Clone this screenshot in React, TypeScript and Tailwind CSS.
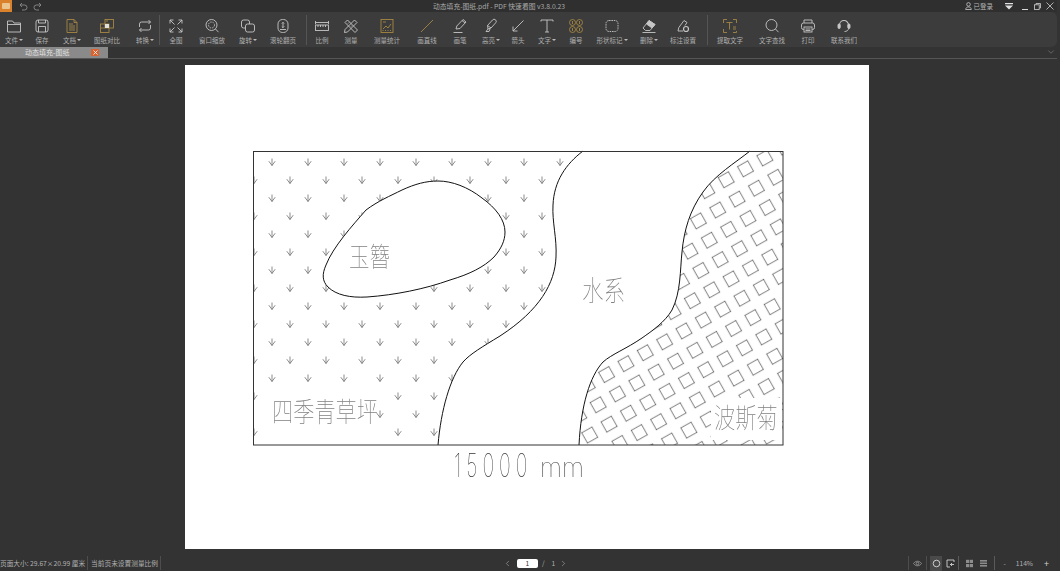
import React from 'react';
import { ChevronLeft, ChevronRight, ChevronDown } from 'lucide-react';

const GOLD = '#a58743';
const ICON = '#c6c6c6';

type Tool = { label: string; w: string; ml?: string; caret?: boolean; gold?: boolean; icon: React.ReactNode };

const Ico: React.FC<{ children: React.ReactNode; gold?: boolean }> = ({ children, gold }) => (
    <svg width="16" height="16" viewBox="0 0 16 16" fill="none" stroke={gold ? GOLD : ICON} strokeWidth="0.9">
        {children}
    </svg>
);

const tools: Tool[] = [
    { label: '文件', w: 'w-[28px]', caret: true, icon: <path d="M1.5 3h5l1.5 2h6.5v9h-13z M1.5 6.5h13" /> },
    { label: '保存', w: 'w-[28px]', icon: <><rect x="2" y="2" width="12" height="12" rx="2" /><path d="M4.5 2v3h7V2 M4.5 14V8.5h7V14" /></> },
    { label: '文档', w: 'w-[32px]', caret: true, gold: true, icon: <path d="M3 1.5h7l3 3v10H3z M10 1.5v3h3 M5 6h4 M5 8h6 M5 10h6 M5 12h6" /> },
    { label: '图纸对比', w: 'w-[38px]', gold: true, icon: <><rect x="6" y="1.5" width="8.5" height="8.5" /><rect x="1.5" y="6" width="8.5" height="8.5" /><rect x="6" y="6" width="4" height="4" fill="#e0e0e0" stroke="none" /><path d="M2 10h4 M7 3h2" /></> },
    { label: '转换', w: 'w-[28px]', ml: 'ml-[5px]', caret: true, icon: <path d="M2.5 9V6a2 2 0 0 1 2-2h9 M11.5 2l2 2-2 2 M13.5 7v3a2 2 0 0 1-2 2h-9 M4.5 10l-2 2 2 2" /> },
    { label: '', w: 'sep', icon: null },
    { label: '全图', w: 'w-[32px]', icon: <path d="M6.5 6.5L2 2 M2 5.5V2h3.5 M9.5 6.5L14 2 M10.5 2H14v3.5 M6.5 9.5L2 14 M2 10.5V14h3.5 M9.5 9.5L14 14 M14 10.5V14h-3.5" /> },
    { label: '窗口缩放', w: 'w-[40px]', icon: <><circle cx="7.5" cy="7" r="5.5" /><circle cx="7.5" cy="7" r="3" strokeDasharray="1.5 1" /><path d="M11.5 11l3 3.2" /></> },
    { label: '旋转', w: 'w-[32px]', caret: true, icon: <><rect x="1.5" y="2" width="8" height="8" rx="2" /><rect x="5.5" y="6" width="9" height="8" rx="2" fill="#3c3c3c" /></> },
    { label: '滚轮翻页', w: 'w-[38px]', icon: <><rect x="3" y="1.5" width="10" height="13" rx="4.5" /><path d="M8 4.5v5 M6.8 5.5L8 4.3l1.2 1.2 M6.8 8.5L8 9.7l1.2-1.2" /><path d="M5 11.5h6" /></> },
    { label: '', w: 'sep', ml: 'ml-[4px]', icon: null },
    { label: '比例', w: 'w-[30px]', icon: <><path d="M1.5 3v3 M14.5 3v3 M1.5 4.5h13" /><rect x="1.5" y="7" width="13" height="5.5" /><path d="M4 7v2 M6.5 7v2 M9 7v2 M11.5 7v2" /></> },
    { label: '测量', w: 'w-[28px]', icon: <path d="M2 4.5L4.5 2l10 10-2.5 2.5z M11.5 2l2.5 2.5-9.5 9.5-3 .5.5-3z M5 5.5l1-1 M8 8.5l1-1" /> },
    { label: '测量统计', w: 'w-[44px]', gold: true, icon: <><rect x="2" y="1.5" width="12" height="13" /><path d="M4 11l3-3 2 2 3-4 M4 4h3 M4 13v-1 M6.5 13v-1 M9 13v-1 M11.5 13v-1" /></> },
    { label: '画直线', w: 'w-[36px]', gold: true, icon: <path d="M2 14L14 2" /> },
    { label: '画笔', w: 'w-[30px]', icon: <path d="M4 11l.8-3L11 1.5l3 2.5-6 6.5z M10 2.5l3 2.5 M1.5 14.5h9" /> },
    { label: '高亮', w: 'w-[32px]', caret: true, icon: <path d="M5 11l-.5-3.5L9.5 2a2 2 0 0 1 3.2 2.8L8 10z M4.5 7.5L8 10 M5 11l-2 2.5h3l1-2.5" /> },
    { label: '箭头', w: 'w-[22px]', icon: <path d="M13.5 2.5L3 13 M3 8.5V13h4.5" /> },
    { label: '文字', w: 'w-[36px]', caret: true, icon: <path d="M2 3.5V2h12v1.5 M8 2v12 M6 14h4" /> },
    { label: '编号', w: 'w-[22px]', gold: true, icon: <><circle cx="4.5" cy="4.5" r="3" /><circle cx="11.5" cy="4.5" r="3" /><circle cx="4.5" cy="11.5" r="3" /><circle cx="11.5" cy="11.5" r="3" /><path d="M4.5 3v3 M11.5 3v3 M4.5 10v3 M11.5 10v3" /></> },
    { label: '形状标记', w: 'w-[50px]', caret: true, icon: <rect x="2" y="2.5" width="12" height="11" rx="3" strokeDasharray="1.6 .8" /> },
    { label: '删除', w: 'w-[24px]', caret: true, icon: <><path d="M2 10l6-7.5 6 4-5 6H4.5z" /><path d="M5.5 6L11 10l3-3.5-6-4z" fill={ICON} /><path d="M1.5 14.5h13" /></> },
    { label: '标注设置', w: 'w-[44px]', icon: <><path d="M3 13l.8-3.5L9 2.5l3 2-2 3 M3 13h5" /><circle cx="11" cy="11" r="2.5" strokeWidth="1.2" /></> },
    { label: '', w: 'sep', ml: 'ml-[2px]', icon: null },
    { label: '提取文字', w: 'w-[44px]', gold: true, icon: <path d="M5 1.5H1.5V5 M11 1.5h3.5V5 M5 14.5H1.5V11 M14.5 13v1.5H11 M4.5 4.5h6 M7.5 4.5v7 M11 9h3 M11 11h3" /> },
    { label: '文字查找', w: 'w-[40px]', icon: <><circle cx="7.5" cy="7" r="5.5" /><path d="M11.5 11l3 3.2" /></> },
    { label: '打印', w: 'w-[32px]', icon: <><path d="M4 5V2h8v3" /><rect x="1.5" y="5" width="13" height="6.5" rx="2" /><rect x="4" y="9" width="8" height="5" fill="#3c3c3c" /><path d="M5.5 11h5 M5.5 12.5h5" /></> },
    { label: '联系我们', w: 'w-[40px]', icon: <><path d="M3.5 9V7a4.5 4.5 0 0 1 9 0v2" strokeWidth="1.1" /><rect x="2" y="6" width="2.2" height="4.5" rx="1" fill={ICON} /><rect x="11.8" y="6" width="2.2" height="4.5" rx="1" fill={ICON} /><path d="M12.5 10.5c0 2-2 3-4 3" /></> },
];

const ToolItem: React.FC<{ tool: Tool }> = ({ tool }) => {
    if (tool.w === 'sep') {
        return <div className={`${tool.ml ?? ''} mt-[3px] h-[30px] w-px bg-[#555555]`} />;
    }
    return (
        <div className={`${tool.w} ${tool.ml ?? ''} flex flex-col items-center`}>
            <div className="mt-[5px] flex h-[17px] items-center justify-center">
                <Ico gold={tool.gold}>{tool.icon}</Ico>
            </div>
            <div className="mt-[1px] flex items-center whitespace-nowrap text-[6.5px] leading-[10px] text-[#b0b0b0]">
                {tool.label}
                {tool.caret && <span className="ml-[1px] border-x-[2px] border-t-[2px] border-x-transparent border-t-[#bbbbbb]" />}
            </div>
        </div>
    );
};

const ARROW = 'M0 -3.5V3.5 M-3.2 -.8L0 3.5L3.2 -.8';
const LEFT_RIVER = 'C566 164 554 181 553 205C552 222 557 238 556 257C555 283 540 310 500 336C482 347 470 354 463 362C450 378 441 410 438 445';
const RIGHT_RIVER = 'C735 163 715 175 703 192C690 210 684 230 682 252C680 270 681 292 672 310C665 322 652 331 642 338C626 349 612 354 603 362C590 376 581 405 579 445';

const MapDrawing = () => (
    <svg className="will-change-transform" width="684" height="484" viewBox="185 65 684 484" fill="none">
        <defs>
            <pattern id="grass" x="254" y="162" width="36" height="36" patternUnits="userSpaceOnUse">
                <g stroke="#666666" strokeWidth=".75">
                    <path transform="translate(18 0)" d={ARROW} />
                    <path transform="translate(18 36)" d={ARROW} />
                    <path transform="translate(0 18)" d={ARROW} />
                    <path transform="translate(36 18)" d={ARROW} />
                </g>
            </pattern>
            <pattern id="tiles" x="749.75" y="153.75" width="22.2" height="22.2" patternUnits="userSpaceOnUse" patternTransform="rotate(-29.4 749.75 153.75)">
                <rect x="5.1" y="5.1" width="12" height="12" stroke="#555555" strokeWidth=".7" />
            </pattern>
        </defs>
        <path d={`M253 151H583${LEFT_RIVER}H253Z`} fill="url(#grass)" />
        <path d={`M783 151H750${RIGHT_RIVER}H783Z`} fill="url(#tiles)" />
        <rect x="262" y="388" width="113" height="54" fill="#ffffff" />
        <rect x="711" y="398" width="71" height="42" fill="#ffffff" />
        <path
            d="M366 210C378 201 390 196 402 190C415 184 426 181 438 181C452 181 468 187 482 198C496 208 505 220 505 232C505 241 501 249 494 257C484 267 470 274 450 280C425 289 395 295 367 297C350 298 336 295 328 287C322 281 322 274 326 265C333 247 352 226 366 210Z"
            fill="#ffffff"
            stroke="#111111"
        />
        <path d={`M583 151${LEFT_RIVER}`} stroke="#111111" />
        <path d={`M750 151${RIGHT_RIVER}`} stroke="#111111" />
        <rect x="253.5" y="151.5" width="529.5" height="293.5" stroke="#333333" />
        <g fill="#808080" fontFamily='"Noto Sans CJK SC", sans-serif' fontWeight="100">
            <text transform="translate(349 267) scale(1 1.35)" fontSize="20.5">玉簪</text>
            <text transform="translate(582 301) scale(1 1.3)" fontSize="21.5">水系</text>
            <text transform="translate(272 422) scale(1 1.3)" fontSize="21.2">四季青草坪</text>
            <text transform="translate(714 428) scale(1 1.3)" fontSize="21.2">波斯菊</text>
        </g>
        <g fill="#333333" fontFamily='Inter, "Liberation Sans", sans-serif' fontWeight="100">
            <text transform="translate(454 477) scale(.6 1)" fontSize="33" letterSpacing="8.3">15000</text>
            <text x="540" y="477" fontSize="26" textLength="44" lengthAdjust="spacingAndGlyphs">mm</text>
        </g>
    </svg>
);

export default function App() {
    return (
        <div className="h-[571px] w-[1060px] overflow-hidden bg-[#333333] font-['Noto_Sans_CJK_SC','Liberation_Sans',sans-serif]">
            <div className="flex h-full w-[1057px] flex-col">
                {/* title bar */}
                <div className="flex h-[12px] items-center bg-[#2f2f2f] text-[#b8b8b8]">
                    <div className="flex h-[12px] w-[12px] items-center justify-center bg-[#d9822b]">
                        <div className="h-[6px] w-[8px] rounded-[1px] bg-[#ecc48e]" />
                    </div>
                    <svg className="ml-[7px]" width="9" height="9" viewBox="0 0 9 9" fill="none" stroke="#8a8a8a" strokeWidth=".9"><path d="M3 1L1 3l2 2 M1 3h4.5a2.5 2.5 0 0 1 0 5H3" /></svg>
                    <svg className="ml-[5px]" width="9" height="9" viewBox="0 0 9 9" fill="none" stroke="#8a8a8a" strokeWidth=".9"><path d="M6 1l2 2-2 2 M8 3H3.5a2.5 2.5 0 0 0 0 5H6" /></svg>
                    <div className="ml-[391px] whitespace-nowrap text-[6.8px] leading-none text-[#a8a8a8]">动态填充-图纸.pdf - PDF 快速看图 v3.8.0.23</div>
                    <div className="ml-auto flex items-center pr-[3px]">
                        <svg width="7" height="8" viewBox="0 0 7 8" fill="none" stroke="#c8c8c8" strokeWidth=".8"><circle cx="3.5" cy="2.4" r="1.8" /><path d="M.7 7.5c0-3.4 5.6-3.4 5.6 0z" /></svg>
                        <span className="ml-[2px] text-[6.5px] leading-none text-[#b4b4b4]">已登录</span>
                        <svg className="ml-[12px]" width="8" height="7" viewBox="0 0 8 7"><path d="M0 0h8v1.2H0z M0 2.4h8L4 6.5z" fill="#e0e0e0" /></svg>
                        <div className="ml-[9px] mt-[6px] h-px w-[6px] bg-[#d8d8d8]" />
                        <svg className="ml-[6px]" width="7" height="7" viewBox="0 0 7 7" fill="none" stroke="#d0d0d0" strokeWidth=".8"><path d="M2 1.5V.5h4.5V5H5.5" /><rect x=".5" y="1.8" width="4.7" height="4.7" /></svg>
                        <svg className="ml-[5px]" width="8" height="8" viewBox="0 0 8 8" fill="none" stroke="#d0d0d0" strokeWidth=".8"><path d="M.5.5l7 7 M7.5.5l-7 7" /></svg>
                    </div>
                </div>

                {/* toolbar */}
                <div className="flex h-[35px] rounded-r-[6px] bg-[#3c3c3c]">
                    {tools.map((tool, i) => (
                        <ToolItem key={i} tool={tool} />
                    ))}
                </div>

                {/* tab strip */}
                <div className="flex h-[12px] border-b border-[#555555]">
                    <div className="flex w-[108px] items-center bg-[#8a8a8a]">
                        <span className="ml-[25px] whitespace-nowrap text-[7px] leading-none text-[#e2e2e2]">动态填充-图纸</span>
                        <span className="ml-[22px] flex h-[7px] w-[8px] items-center justify-center bg-[#d9622f]">
                            <svg width="5" height="5" viewBox="0 0 5 5" stroke="#ffffff" strokeWidth=".8"><path d="M.5.5l4 4 M4.5.5l-4 4" /></svg>
                        </span>
                    </div>
                    <ChevronDown className="ml-auto mr-[1px]" size={10} strokeWidth={1} color="#a8a8a8" />
                </div>

                {/* page area */}
                <div className="flex h-[496px] pl-[185px] pt-[6px]">
                    <div className="h-[484px] w-[684px] bg-white">
                        <MapDrawing />
                    </div>
                </div>

                {/* status bar */}
                <div className="flex h-[16px] items-center text-[6.7px] leading-none text-[#b0b0b0]">
                    <span className="whitespace-nowrap">页面大小: 29.67×20.99 厘米</span>
                    <div className="ml-[2px] h-[14px] w-px bg-[#4d4d4d]" />
                    <span className="ml-[3px] whitespace-nowrap">当前页未设置测量比例</span>
                    <div className="ml-[2px] h-[14px] w-px bg-[#4d4d4d]" />
                    <ChevronLeft className="ml-[342px]" size={9} color="#d0d0d0" strokeWidth={1.2} />
                    <div className="ml-[5px] flex h-[9px] w-[21px] items-center justify-center rounded-[2px] bg-white text-[#333333]">1</div>
                    <span className="ml-[4px]">/</span>
                    <span className="ml-[7px]">1</span>
                    <ChevronRight className="ml-[4px]" size={9} color="#d0d0d0" strokeWidth={1.2} />
                    <div className="ml-auto flex items-center pr-[3px]">
                        <div className="h-[14px] w-px bg-[#4d4d4d]" />
                        <svg className="mx-[4px]" width="9" height="9" viewBox="0 0 9 9" fill="none" stroke="#a0a0a0" strokeWidth=".8"><path d="M.5 4.5C2.5 1.5 6.5 1.5 8.5 4.5C6.5 7.5 2.5 7.5.5 4.5z" /><circle cx="4.5" cy="4.5" r="1.3" /></svg>
                        <div className="h-[14px] w-px bg-[#4d4d4d]" />
                        <div className="ml-[3px] flex h-[15px] w-[12px] items-center justify-center bg-[#4a4a4a]">
                            <svg width="9" height="9" viewBox="0 0 9 9" fill="none" stroke="#d8d8d8" strokeWidth=".9"><circle cx="4.5" cy="4.5" r="3.3" /></svg>
                        </div>
                        <svg className="ml-[4px]" width="9" height="9" viewBox="0 0 9 9" fill="none" stroke="#d0d0d0" strokeWidth=".9"><path d="M8 3V1H1v7h3 M4 5.5h4 M6 4l-1.5 1.5L6 7" /></svg>
                        <div className="ml-[3px] h-[14px] w-px bg-[#5a5a5a]" />
                        <svg className="ml-[6px]" width="9" height="9" viewBox="0 0 9 9" fill="#8c8c8c"><rect x="1" y=".8" width="7" height="3.2" /><rect x="1" y="5" width="7" height="3.2" /><path d="M4.5 0v9" stroke="#333333" strokeWidth=".6" /></svg>
                        <svg className="ml-[5px]" width="9" height="9" viewBox="0 0 9 9" fill="#8c8c8c"><rect x="1" y="1" width="7" height="1.6" /><rect x="1" y="3.5" width="7" height="1.6" /><rect x="1" y="6" width="7" height="1.6" /></svg>
                        <div className="ml-[6px] h-[14px] w-px bg-[#5a5a5a]" />
                        <span className="ml-[8px]">-</span>
                        <span className="ml-[10px] whitespace-nowrap">114%</span>
                        <span className="ml-[11px] text-[9px] text-[#d0d0d0]">+</span>
                        <div className="w-[5px]" />
                    </div>
                </div>
            </div>
        </div>
    );
}
